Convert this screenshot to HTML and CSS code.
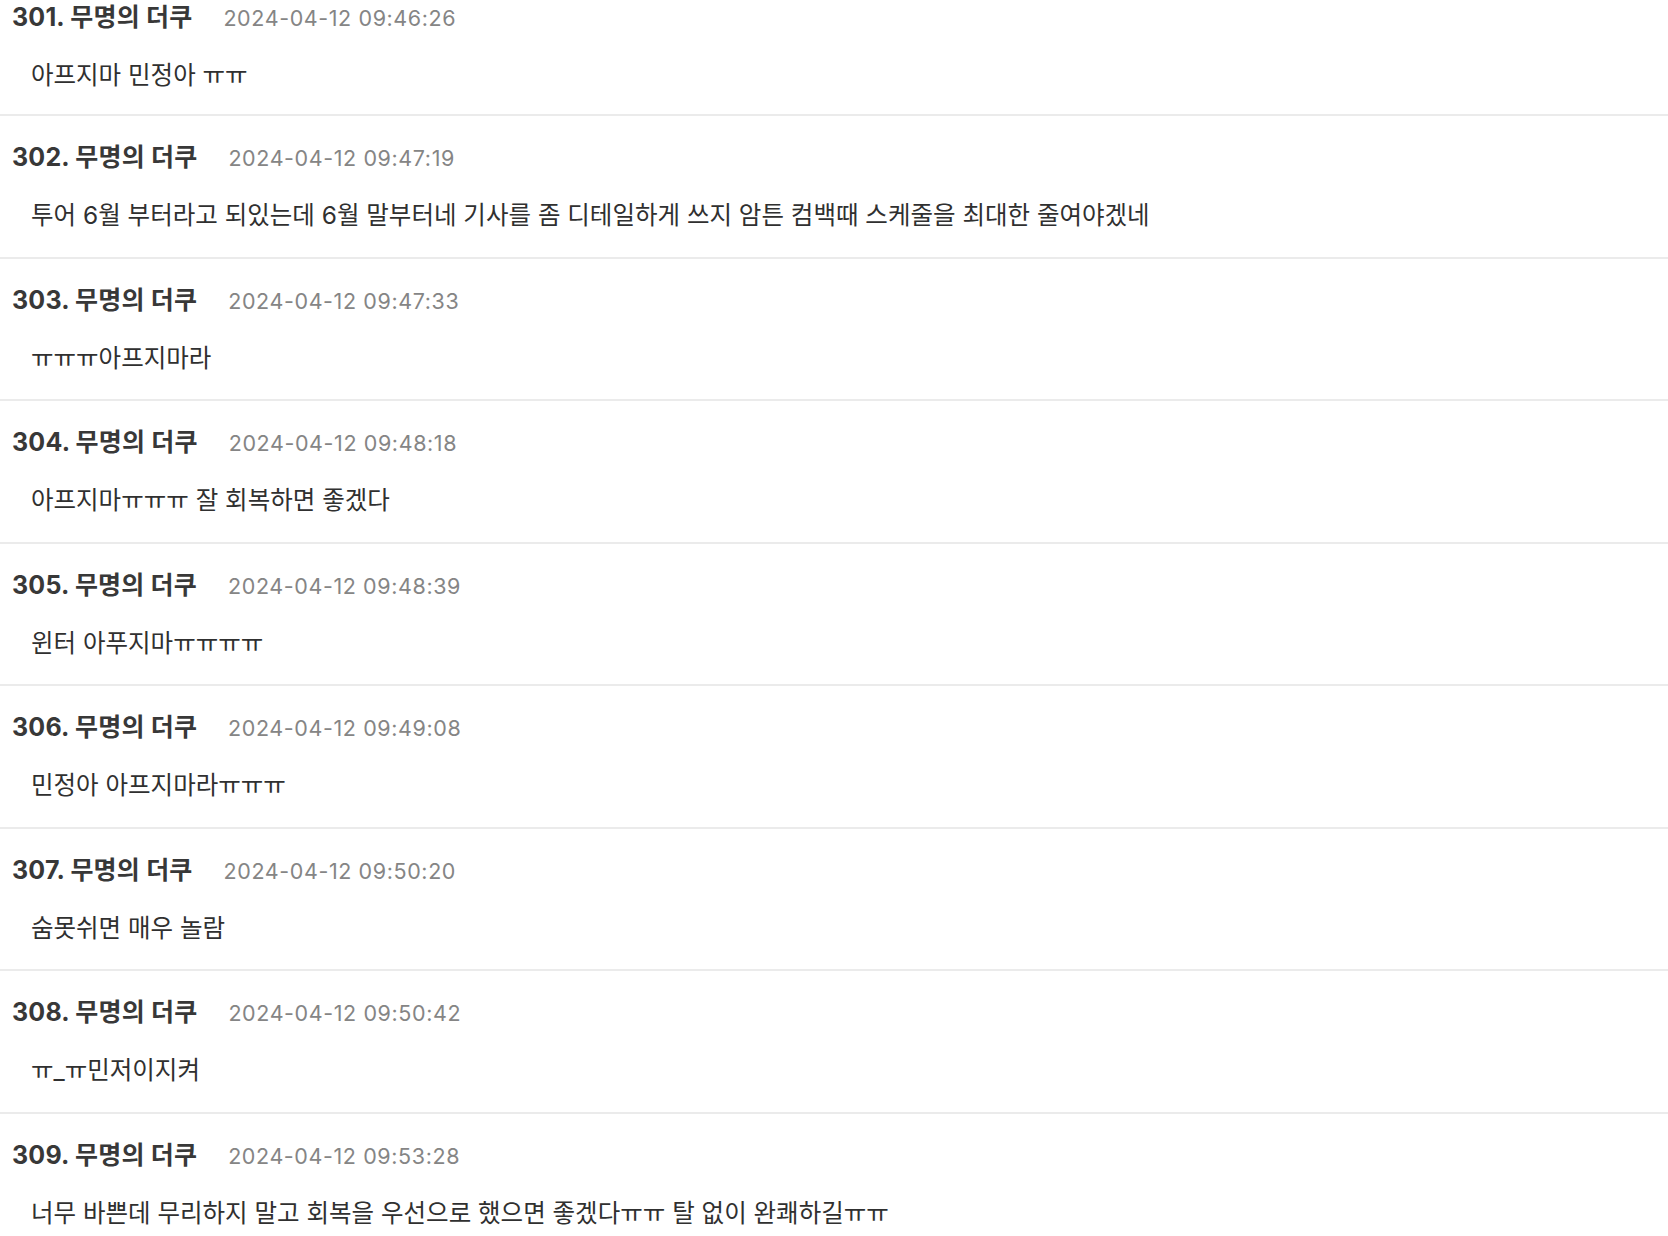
FILE: index.html
```html
<!DOCTYPE html>
<html lang="ko">
  <head>
    <meta charset="UTF-8" />
    <meta name="viewport" content="width=device-width, initial-scale=1.0" />
    <title>댓글</title>
    <link rel="stylesheet" href="styles.css">
  </head>
  <body>
    <ul class="comment-list">
      <li class="comment">
        <div class="comment-head">
          <span class="comment-name">301. 무명의 더쿠</span>
          <span class="comment-date">2024-04-12 09:46:26</span>
        </div>
        <p class="comment-body">아프지마 민정아 ㅠㅠ</p>
      </li>
      <li class="comment">
        <div class="comment-head">
          <span class="comment-name">302. 무명의 더쿠</span>
          <span class="comment-date">2024-04-12 09:47:19</span>
        </div>
        <p class="comment-body">투어 6월 부터라고 되있는데 6월 말부터네 기사를 좀 디테일하게 쓰지 암튼 컴백때 스케줄을 최대한 줄여야겠네</p>
      </li>
      <li class="comment">
        <div class="comment-head">
          <span class="comment-name">303. 무명의 더쿠</span>
          <span class="comment-date">2024-04-12 09:47:33</span>
        </div>
        <p class="comment-body">ㅠㅠㅠ아프지마라</p>
      </li>
      <li class="comment">
        <div class="comment-head">
          <span class="comment-name">304. 무명의 더쿠</span>
          <span class="comment-date">2024-04-12 09:48:18</span>
        </div>
        <p class="comment-body">아프지마ㅠㅠㅠ 잘 회복하면 좋겠다</p>
      </li>
      <li class="comment">
        <div class="comment-head">
          <span class="comment-name">305. 무명의 더쿠</span>
          <span class="comment-date">2024-04-12 09:48:39</span>
        </div>
        <p class="comment-body">윈터 아푸지마ㅠㅠㅠㅠ</p>
      </li>
      <li class="comment">
        <div class="comment-head">
          <span class="comment-name">306. 무명의 더쿠</span>
          <span class="comment-date">2024-04-12 09:49:08</span>
        </div>
        <p class="comment-body">민정아 아프지마라ㅠㅠㅠ</p>
      </li>
      <li class="comment">
        <div class="comment-head">
          <span class="comment-name">307. 무명의 더쿠</span>
          <span class="comment-date">2024-04-12 09:50:20</span>
        </div>
        <p class="comment-body">숨못쉬면 매우 놀람</p>
      </li>
      <li class="comment">
        <div class="comment-head">
          <span class="comment-name">308. 무명의 더쿠</span>
          <span class="comment-date">2024-04-12 09:50:42</span>
        </div>
        <p class="comment-body">ㅠ_ㅠ민저이지켜</p>
      </li>
      <li class="comment">
        <div class="comment-head">
          <span class="comment-name">309. 무명의 더쿠</span>
          <span class="comment-date">2024-04-12 09:53:28</span>
        </div>
        <p class="comment-body">너무 바쁜데 무리하지 말고 회복을 우선으로 했으면 좋겠다ㅠㅠ 탈 없이 완쾌하길ㅠㅠ</p>
      </li>
    </ul>
  </body>
</html>
```

FILE: styles.css
```css
body {
  margin: 0;
  background-color: #fff;
  color: #333;
  font-family: Inter, "Noto Sans CJK KR", sans-serif;
}
.comment-list {
  list-style-type: none;
  margin: -24px 0 0;
  padding: 0;
}
.comment {
  padding: 25px 12px 25.5px;
  border-bottom: 2px solid #ebebeb;
}
.comment:first-child {
  padding-bottom: 23px;
}
.comment-head {
  display: flex;
  align-items: baseline;
  gap: 31px;
  height: 32px;
  line-height: 32px;
}
.comment-name {
  font-size: 25px;
  font-weight: 700;
  color: #383838;
  letter-spacing: 0.2px;
}
.comment-date {
  font-size: 21.5px;
  color: #858585;
  letter-spacing: 0.6px;
}
.comment-body {
  margin: 26px 0 0;
  padding-left: 19px;
  font-size: 24.5px;
  line-height: 32px;
  color: #303030;
}
```
